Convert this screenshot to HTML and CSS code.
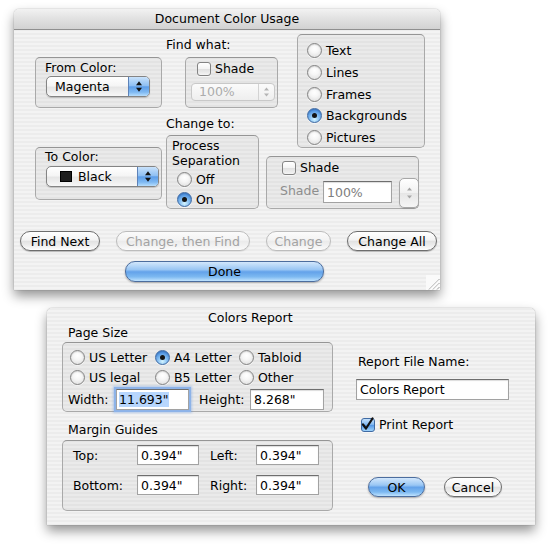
FILE: index.html
```html
<!DOCTYPE html>
<html>
<head>
<meta charset="utf-8">
<title>Dialogs</title>
<link rel="stylesheet" href="styles.css">
</head>
<body>
<div class="desk">

  <div class="win win-doc">
    <div class="titlebar">Document Color Usage</div>
    <div class="doc-body">
      <div class="doc-top">
        <div class="col-a">
          <div class="group from-box">
            <div class="glabel">From Color:</div>
            <div class="popup popup-from">
              <span class="popup-text">Magenta</span>
              <span class="popup-arrows"><svg width="6" height="11" viewBox="0 0 6 11"><path d="M0 4.2 L3 0.2 L6 4.2Z M0 6.8 L3 10.8 L6 6.8Z" fill="#111"/></svg></span>
            </div>
          </div>
          <div class="group to-box">
            <div class="glabel">To Color:</div>
            <div class="popup popup-to">
              <span class="swatch"></span>
              <span class="popup-text">Black</span>
              <span class="popup-arrows"><svg width="6" height="11" viewBox="0 0 6 11"><path d="M0 4.2 L3 0.2 L6 4.2Z M0 6.8 L3 10.8 L6 6.8Z" fill="#111"/></svg></span>
            </div>
          </div>
        </div>

        <div class="col-b">
          <div class="caption find-cap">Find what:</div>
          <div class="group shade-box">
            <div class="check-row"><span class="checkbox"></span><span>Shade</span></div>
            <div class="combo-disabled">
              <span class="combo-text">100%</span>
              <span class="combo-step"><svg width="5" height="10" viewBox="0 0 5 10"><path d="M0 3.5 L2.5 0.5 L5 3.5Z M0 6.5 L2.5 9.5 L5 6.5Z" fill="#b4b4b4"/></svg></span>
            </div>
          </div>
          <div class="caption change-cap">Change to:</div>
          <div class="group process-box">
            <div class="ptext">Process</div>
            <div class="ptext">Separation</div>
            <div class="radio-row first"><span class="radio"></span><span>Off</span></div>
            <div class="radio-row"><span class="radio on"></span><span>On</span></div>
          </div>
        </div>

        <div class="col-c">
          <div class="group kinds-box">
            <div class="radio-row"><span class="radio"></span><span>Text</span></div>
            <div class="radio-row"><span class="radio"></span><span>Lines</span></div>
            <div class="radio-row"><span class="radio"></span><span>Frames</span></div>
            <div class="radio-row"><span class="radio on"></span><span>Backgrounds</span></div>
            <div class="radio-row"><span class="radio"></span><span>Pictures</span></div>
          </div>
          <div class="group shade2-box">
            <div class="check-row shade2-check"><span class="checkbox"></span><span>Shade</span></div>
            <div class="shade2-row">
              <span class="dim-label">Shade</span>
              <span class="field shade2-field">100%</span>
              <span class="stepper"><svg width="5" height="12" viewBox="0 0 5 12"><path d="M0 3.5 L2.5 0.5 L5 3.5Z M0 8.5 L2.5 11.5 L5 8.5Z" fill="#a6a6a6"/></svg></span>
            </div>
          </div>
        </div>
      </div>

      <div class="doc-buttons">
        <span class="btn btn-findnext">Find Next</span>
        <span class="btn btn-disabled btn-cthf">Change, then Find</span>
        <span class="btn btn-disabled btn-change">Change</span>
        <span class="btn btn-changeall">Change All</span>
      </div>
      <div class="done-row">
        <span class="btn btn-default btn-done">Done</span>
      </div>
    </div>
    <div class="grip"><svg width="14" height="15" viewBox="0 0 14 15"><path d="M3 14.5 L13.5 4 M7 14.5 L13.5 8 M11 14.5 L13.5 12" stroke="#9c9c9c" stroke-width="1"/><path d="M4 14.5 L13.5 5 M8 14.5 L13.5 9" stroke="#fff" stroke-width="1"/></svg></div>
  </div>

  <div class="win win-report">
    <div class="report-title">Colors Report</div>
    <div class="report-body">
      <div class="rep-left">
        <div class="sec-label">Page Size</div>
        <div class="group page-box">
          <div class="size-grid">
            <div class="radio-row"><span class="radio"></span><span>US Letter</span></div>
            <div class="radio-row"><span class="radio on"></span><span>A4 Letter</span></div>
            <div class="radio-row"><span class="radio"></span><span>Tabloid</span></div>
            <div class="radio-row"><span class="radio"></span><span>US legal</span></div>
            <div class="radio-row"><span class="radio"></span><span>B5 Letter</span></div>
            <div class="radio-row"><span class="radio"></span><span>Other</span></div>
          </div>
          <div class="dim-row">
            <span class="lbl-width">Width:</span>
            <span class="field field-focus w-field"><span class="sel">11.693"</span></span>
            <span class="lbl-height">Height:</span>
            <span class="field h-field">8.268"</span>
          </div>
        </div>
        <div class="sec-label margin-label">Margin Guides</div>
        <div class="group margin-box">
          <div class="mrow">
            <span class="mlbl">Top:</span>
            <span class="field mfield1">0.394"</span>
            <span class="mlbl2">Left:</span>
            <span class="field mfield2">0.394"</span>
          </div>
          <div class="mrow second">
            <span class="mlbl">Bottom:</span>
            <span class="field mfield1">0.394"</span>
            <span class="mlbl2">Right:</span>
            <span class="field mfield2">0.394"</span>
          </div>
        </div>
      </div>
      <div class="rep-right">
        <div class="rf-label">Report File Name:</div>
        <div class="field rf-field">Colors Report</div>
        <div class="check-row print-row">
          <span class="checkbox checked"><svg width="15" height="15" viewBox="0 0 15 15"><path d="M3 7.5 L6 11.5 L12.5 1.5" fill="none" stroke="#111" stroke-width="2.2" stroke-linecap="round" stroke-linejoin="round"/></svg></span>
          <span>Print Report</span>
        </div>
        <div class="rep-buttons">
          <span class="btn btn-default btn-ok">OK</span>
          <span class="btn btn-cancel">Cancel</span>
        </div>
      </div>
    </div>
  </div>

</div>
</body>
</html>
```

FILE: styles.css
```css
* { box-sizing: border-box; }
html, body { margin: 0; padding: 0; background: #fff; }
body {
  font-family: "DejaVu Sans", "Liberation Sans", sans-serif;
  font-size: 12.5px;
  line-height: 15px;
  color: #000;
}
.desk { position: relative; width: 550px; height: 550px; overflow: hidden; }

/* windows */
.win {
  position: absolute;
  background: repeating-linear-gradient(180deg, #ececec 0 2px, #f3f3f3 2px 4px);
  box-shadow: 0 6px 12px rgba(0,0,0,0.42), 0 0 1px rgba(0,0,0,0.55);
}
.win-doc { left: 14px; top: 9px; width: 426px; height: 281px; border-radius: 5px 5px 0 0; }
.win-report { left: 47px; top: 308px; width: 488px; height: 217px; border-radius: 5px 5px 0 0; }

.titlebar {
  height: 21px;
  line-height: 20px;
  text-align: center;
  border-bottom: 1px solid #8f8f8f;
  border-radius: 5px 5px 0 0;
  background: linear-gradient(#f2f2f2, #e4e4e4 40%, #d2d2d2);
}

/* group boxes */
.group {
  border: 1px solid #a9a9a9;
  border-top-color: #959595;
  border-radius: 5px;
  background: rgba(0,0,0,0.035);
  flex: none;
}

/* controls */
.radio-row { display: flex; align-items: center; gap: 4px; }
.check-row { display: flex; align-items: center; gap: 4px; height: 15px; }

.radio {
  width: 15px; height: 15px; flex: none;
  border-radius: 50%;
  border: 1px solid #838383;
  background: radial-gradient(circle at 50% 35%, #ffffff 0, #f6f6f6 40%, #d9d9d9 100%);
  box-shadow: inset 0 1px 1px rgba(0,0,0,0.12), 0 1px 0 rgba(255,255,255,0.6);
  display: flex; align-items: center; justify-content: center;
}
.radio.on {
  border-color: #3f6aa3;
  background: radial-gradient(circle at 50% 80%, #d4f4ff 0, #8cc4f4 35%, #4b8fde 75%, #3a78c9 100%);
}
.radio.on::after {
  content: "";
  width: 5px; height: 5px; border-radius: 50%;
  background: #141414;
}

.checkbox {
  width: 14px; height: 14px; flex: none;
  border: 1px solid #838383;
  border-radius: 3px;
  background: linear-gradient(#ffffff, #f3f3f3 50%, #e0e0e0 51%, #f4f4f4);
  box-shadow: 0 1px 0 rgba(255,255,255,0.6);
}
.checkbox.checked {
  border-color: #3f6aa3;
  background: linear-gradient(#c4e0fb, #86bbf1 45%, #5598e6 52%, #9fd3fb);
  display: flex; align-items: flex-end; justify-content: flex-start;
}
.checkbox.checked svg { margin: 0 -3px -1px -2px; flex: none; }

.popup {
  display: flex; align-items: center;
  height: 21px;
  border: 1px solid #848484;
  border-radius: 5px;
  overflow: hidden;
  padding-left: 8px;
  background: linear-gradient(#ffffff, #f5f5f5 45%, #e6e6e6 55%, #f7f7f7);
  box-shadow: 0 1px 1px rgba(0,0,0,0.18);
}
.popup-text { flex: 1; }
.popup-arrows {
  width: 21px; height: 100%; flex: none;
  border-left: 1px solid #5d82b8;
  background: linear-gradient(#c9e2fb, #8fc0f3 45%, #5d9ee9 52%, #7fb9f2 80%, #b7defd);
  display: flex; align-items: center; justify-content: center;
}
.swatch {
  width: 12px; height: 11px; flex: none;
  background: #1e1e1e;
  border: 1px solid #000;
  margin-right: 6px;
}

.field {
  display: flex; align-items: center;
  background: #fff;
  border: 1px solid #a2a2a2;
  border-top-color: #6e6e6e;
  box-shadow: inset 0 1px 1px rgba(0,0,0,0.14);
  padding-left: 3px;
  flex: none;
}
.field-focus {
  box-shadow: 0 0 0 2px #8db3e8, 0 0 2px 3px rgba(110,160,230,0.45);
  padding-left: 2px;
}
.sel { background: #b7d6fd; }

.btn {
  display: flex; align-items: center; justify-content: center;
  height: 20px;
  border: 1px solid #6d6d6d;
  border-radius: 10px;
  background: linear-gradient(#ffffff, #f3f3f3 45%, #e2e2e2 52%, #f0f0f0 80%, #ffffff);
  box-shadow: 0 1px 1px rgba(0,0,0,0.25);
  flex: none;
  white-space: nowrap;
}
.btn-disabled {
  border-color: #bcbcbc;
  color: #a3a3a3;
  box-shadow: 0 1px 1px rgba(0,0,0,0.08);
  background: linear-gradient(#fbfbfb, #f3f3f3 45%, #ebebeb 52%, #f3f3f3 80%, #fbfbfb);
}
.btn-default {
  border-color: #4c6d9e;
  background: linear-gradient(#d2e7fc, #99c6f4 40%, #63a2ea 52%, #7db9f1 78%, #c0e3fe);
  box-shadow: 0 1px 2px rgba(0,0,0,0.3);
}

/* doc dialog layout */
.doc-top { display: flex; padding-left: 21px; }
.col-a { width: 127px; flex: none; }
.from-box { margin-top: 27px; height: 51px; padding: 2px 0 0 9px; }
.to-box { margin-top: 39px; height: 53px; padding: 1px 0 0 9px; }
.popup-from { margin-top: 1px; margin-left: 1px; width: 104px; }
.popup-to { margin-top: 2px; margin-left: 1px; width: 113px; padding-left: 13px; }

.col-b { width: 112px; margin-left: 4px; flex: none; }
.find-cap { margin-top: 7px; }
.shade-box { margin-top: 5px; margin-left: 19px; width: 93px; height: 51px; padding: 3px 0 0 11px; }
.combo-disabled {
  display: flex;
  margin-top: 7px; margin-left: -6px;
  width: 84px; height: 18px;
  border: 1px solid #c9c9c9;
  border-radius: 4px;
  background: linear-gradient(#fbfbfb, #eeeeee);
  color: #acacac;
}
.combo-text { flex: 1; padding-left: 7px; line-height: 16px; }
.combo-step {
  width: 16px; flex: none;
  border-left: 1px solid #d3d3d3;
  display: flex; align-items: center; justify-content: center;
}
.change-cap { margin-top: 8px; }
.process-box { margin-top: 4px; width: 93px; height: 74px; padding: 2px 0 0 5px; }
.process-box .radio-row { height: 20px; margin-left: 5px; }
.process-box .radio-row.first { margin-top: 1px; }

.col-c { width: 159px; margin-left: -12px; flex: none; }
.kinds-box { margin-top: 4px; margin-left: 31px; width: 128px; height: 114px; padding: 5px 0 0 9px; }
.kinds-box .radio-row { height: 21.7px; }
.shade2-box { margin-top: 8px; width: 153px; height: 53px; padding-top: 3px; }
.shade2-check { padding-left: 15px; }
.shade2-row { display: flex; align-items: flex-start; margin-top: 3px; padding-left: 13px; }
.dim-label { width: 43px; margin-top: 5px; color: #8e8e8e; flex: none; }
.shade2-field { width: 69px; height: 22px; margin-top: 3px; color: #7d7d7d; }
.stepper {
  width: 20px; height: 30px; margin-left: 7px; flex: none;
  border: 1px solid #a7a7a7;
  border-radius: 5px;
  background: linear-gradient(#ffffff, #f1f1f1 50%, #e6e6e6 51%, #f5f5f5);
  box-shadow: 0 1px 1px rgba(0,0,0,0.12);
  display: flex; align-items: center; justify-content: center;
}

.doc-buttons { display: flex; gap: 16px; margin-top: 22px; padding-left: 6px; }
.btn-findnext { width: 80px; }
.btn-cthf { width: 134px; }
.btn-change { width: 65px; }
.btn-changeall { width: 90px; }
.done-row { display: flex; margin-top: 10px; padding-left: 111px; }
.btn-done { width: 199px; height: 21px; }

.grip {
  position: absolute; right: 0; bottom: 0;
  width: 14px; height: 15px;
  background: #fafafa;
}
.grip svg { display: block; }

/* report dialog layout */
.report-title { margin: 3px 0 0 161px; height: 14px; line-height: 14px; }
.report-body { display: flex; padding-left: 15px; }
.rep-left { width: 271px; flex: none; }
.sec-label { margin-left: 6px; }
.page-box { margin-top: 2px; height: 70px; padding: 4px 0 0 7px; }
.size-grid { display: grid; grid-template-columns: 85px 84px auto; grid-auto-rows: 20px; }
.dim-row { display: flex; align-items: center; margin-top: 2px; margin-left: -2px; }
.lbl-width { width: 48px; flex: none; }
.w-field { width: 73px; height: 21px; }
.lbl-height { width: 51px; margin-left: 10px; flex: none; }
.h-field { width: 74px; height: 21px; }

.margin-label { margin-top: 10px; }
.margin-box { margin-top: 3px; height: 71px; padding: 4px 0 0 10px; }
.mrow { display: flex; align-items: center; height: 20px; }
.mrow.second { margin-top: 10px; }
.mlbl { width: 64px; flex: none; }
.mlbl2 { width: 46px; margin-left: 11px; flex: none; }
.mfield1 { width: 62px; height: 20px; }
.mfield2 { width: 63px; height: 20px; }

.rep-right { width: 153px; margin-left: 23px; flex: none; }
.rf-label { margin-top: 29px; margin-left: 2px; }
.rf-field { margin-top: 10px; width: 153px; height: 21px; }
.print-row { margin-top: 17px; margin-left: 5px; }
.rep-buttons { display: flex; gap: 19px; margin-top: 45px; margin-left: 12px; }
.btn-ok { width: 57px; }
.btn-cancel { width: 58px; }
```
